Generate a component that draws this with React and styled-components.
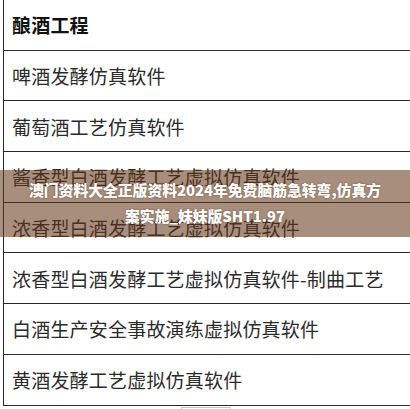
import React from 'react';
import styled, { createGlobalStyle } from 'styled-components';

const Global = createGlobalStyle`
    html, body {
        margin: 0;
        padding: 0;
        background: #fff;
        overflow: hidden;
    }
    body {
        font-family: "Noto Sans CJK SC", "Liberation Sans", sans-serif;
    }
`;

const Page = styled.div`
    position: relative;
    width: 410px;
    height: 409px;
    overflow: hidden;
    padding-left: 3px;
    box-sizing: border-box;
`;

const Table = styled.div`
    width: 430px;
    border-left: 1px solid #2a2a2a;
    display: flex;
    flex-direction: column;
`;

const Row = styled.div`
    height: 50.7px;
    box-sizing: border-box;
    border-bottom: 1px solid #2a2a2a;
    display: flex;
    align-items: center;
    padding-left: 8px;
    font-size: 19px;
    letter-spacing: 0.2px;
    color: ${({ head }) => (head ? '#111' : '#2b2b2b')};
    font-weight: ${({ head }) => (head ? 700 : 400)};
    white-space: nowrap;
`;

const Pager = styled.div`
    width: 50px;
    height: 10px;
    margin: 1px 0 0 178px;
    border: 1px solid #c8c8c8;
    border-bottom: none;
    box-sizing: border-box;
`;

// 水印标题横幅，盖在表格上面
const Banner = styled.div`
    position: absolute;
    left: 0;
    right: 0;
    top: 170px;
    height: 67px;
    box-sizing: border-box;
    padding: 7px 8px 0;
    background: rgba(100, 54, 21, 0.56);
    color: #fff;
    font-size: 14.8px;
    font-weight: 900;
    line-height: 26px;
    text-align: center;
    white-space: nowrap;
    text-shadow: 0 0 2px rgba(60, 30, 10, 0.5);
`;

const rows = [
    '啤酒发酵仿真软件',
    '葡萄酒工艺仿真软件',
    '酱香型白酒发酵工艺虚拟仿真软件',
    '浓香型白酒发酵工艺虚拟仿真软件',
    '浓香型白酒发酵工艺虚拟仿真软件-制曲工艺',
    '白酒生产安全事故演练虚拟仿真软件',
    '黄酒发酵工艺虚拟仿真软件',
];

export default function App() {
    return (
        <Page>
            <Global />
            <Table>
                <Row head>酿酒工程</Row>
                {rows.map((r, i) => (
                    <Row key={i}>{r}</Row>
                ))}
            </Table>
            <Pager />
            <Banner>
                澳门资料大全正版资料2024年免费脑筋急转弯,仿真方
                <br />
                案实施_妹妹版SHT1.97
            </Banner>
        </Page>
    );
}
